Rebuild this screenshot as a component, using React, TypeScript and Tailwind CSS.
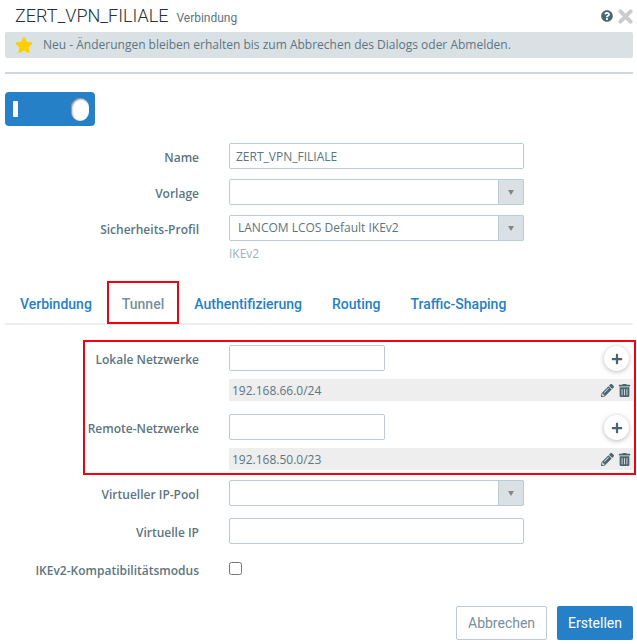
import { useState, type ReactNode } from "react";
import { FaPencilAlt, FaPlus, FaQuestionCircle, FaStar, FaTrashAlt } from "react-icons/fa";

const tabs = ["Verbindung", "Tunnel", "Authentifizierung", "Routing", "Traffic-Shaping"];

const inputClass =
  "block w-full rounded-xs border border-[#bccbd3] bg-white px-1.5 text-[12px] text-[#5b7582] outline-none focus:border-[#2580c8]";

interface FieldProps {
  id: string;
  label: string;
  children: ReactNode;
}

function Field({ id, label, children }: FieldProps) {
  return (
    <div className="grid grid-cols-[194px_1fr] items-start gap-x-[30px]">
      <label
        htmlFor={id}
        className="pt-[5px] text-right text-[12px] leading-5 font-semibold whitespace-nowrap"
      >
        {label}
      </label>
      <div className="min-w-0">{children}</div>
    </div>
  );
}

interface DropdownProps {
  id: string;
  options: string[];
}

function Dropdown({ id, options }: DropdownProps) {
  return (
    <div className="relative max-w-[295px]">
      <select id={id} className={`${inputClass} h-[26px] appearance-none pr-8 pl-2`}>
        {options.map((option) => (
          <option key={option}>{option}</option>
        ))}
      </select>
      <span className="pointer-events-none absolute inset-y-0 right-0 flex w-[26px] items-center justify-center rounded-r-xs border border-[#bccbd3] bg-[#dae1e5]">
        <svg viewBox="0 0 6 5" className="h-[5px] w-1.5 fill-[#858585]">
          <path d="M0 0h6L3 5z" />
        </svg>
      </span>
    </div>
  );
}

interface NetworkFieldProps {
  id: string;
  label: string;
  networks: string[];
}

function NetworkField({ id, label, networks }: NetworkFieldProps) {
  return (
    <Field id={id} label={label}>
      <div className="flex h-[26px] items-start justify-between">
        <input id={id} type="text" className={`${inputClass} h-[26px] max-w-[156px]`} />
        <button
          type="button"
          aria-label="Hinzufügen"
          className="mt-px mr-1 flex size-[25px] items-center justify-center rounded-full bg-white text-[#4a6572] shadow-[0_1px_5px_rgba(0,0,0,0.28)]"
        >
          <FaPlus className="size-3" />
        </button>
      </div>
      <ul className="mt-2 bg-[#eeeeee]">
        {networks.map((network) => (
          <li key={network} className="flex h-[22px] items-center pt-px pr-0.5 pl-[3px] text-[12px]">
            <span className="flex-1">{network}</span>
            <button type="button" aria-label="Bearbeiten" className="mr-1 text-[#4a6572]">
              <FaPencilAlt className="size-[13px]" />
            </button>
            <button type="button" aria-label="Löschen" className="text-[#4a6572]">
              <FaTrashAlt className="size-[13px]" />
            </button>
          </li>
        ))}
      </ul>
    </Field>
  );
}

export default function App() {
  const [enabled, setEnabled] = useState(true);
  const [activeTab, setActiveTab] = useState("Tunnel");

  return (
    <main className="bg-white pt-1 pr-1 pb-1 pl-[5px] font-['Open_Sans',sans-serif] text-[#5b7582]">
      <header className="flex h-7 items-center justify-between pl-2.5">
        <div className="flex items-baseline gap-2 pb-1 font-['Roboto',sans-serif]">
          <h1 className="text-[18px] leading-6 font-light text-[#263238]">ZERT_VPN_FILIALE</h1>
          <span className="text-[12px]">Verbindung</span>
        </div>
        <div className="flex items-center gap-[5px] pb-1">
          <button type="button" aria-label="Hilfe" className="text-[#4a6572]">
            <FaQuestionCircle className="size-3" />
          </button>
          <button type="button" aria-label="Schließen" className="text-[#cccccc]">
            <svg viewBox="0 0 15 15" className="size-[15px]" stroke="currentColor" fill="none">
              <path d="M2.4 2.4l10.2 10.2M12.6 2.4L2.4 12.6" strokeWidth="4" strokeLinecap="round" />
            </svg>
          </button>
        </div>
      </header>

      <p className="flex h-[26px] items-center gap-2.5 rounded-xs bg-[#dae1e5] pl-2.5 text-[12px]">
        <FaStar className="size-[18px] text-[#fcd000]" />
        Neu - Änderungen bleiben erhalten bis zum Abbrechen des Dialogs oder Abmelden.
      </p>

      <hr className="mt-3.5 border-t-2 border-[#d0d8dd]" />

      <label className="relative mt-[18px] flex h-[34px] w-[90px] items-center justify-between rounded-sm bg-[#2580c8] pr-1.5 pl-2">
        <input
          type="checkbox"
          role="switch"
          aria-label="Aktiv"
          checked={enabled}
          onChange={(e) => setEnabled(e.target.checked)}
          className="absolute inset-0 cursor-pointer appearance-none"
        />
        <span className="h-4 w-[5px] rounded-[1px] bg-white" />
        <span className="h-[23px] w-[18px] rounded-full bg-white shadow-[inset_1px_1px_2px_rgba(0,0,0,0.5)]" />
      </label>

      <form onSubmit={(e) => e.preventDefault()}>
        <div className="mt-[17px] space-y-2.5">
          <Field id="name" label="Name">
            <input
              id="name"
              type="text"
              defaultValue="ZERT_VPN_FILIALE"
              className={`${inputClass} h-[26px] max-w-[295px]`}
            />
          </Field>
          <Field id="template" label="Vorlage">
            <Dropdown id="template" options={[""]} />
          </Field>
          <Field id="profile" label="Sicherheits-Profil">
            <Dropdown id="profile" options={["LANCOM LCOS Default IKEv2"]} />
            <p className="mt-1 text-[12px] leading-[18px] text-[#9fb1bb]">IKEv2</p>
          </Field>
        </div>

        <nav className="mt-[18px] flex border-b-2 border-[#eeeeee] font-['Roboto',sans-serif]">
          {tabs.map((tab) => (
            <button
              key={tab}
              type="button"
              onClick={() => setActiveTab(tab)}
              className={`-mb-px h-[43px] border-2 px-[13px] pt-1 text-[14px] font-medium ${
                tab === activeTab
                  ? "border-[#f5000f] text-[#78909c]"
                  : "border-transparent text-[#2580c8]"
              }`}
            >
              {tab}
            </button>
          ))}
        </nav>

        <div className="relative mt-5 flex flex-col gap-[13px]">
          <NetworkField id="local" label="Lokale Netzwerke" networks={["192.168.66.0/24"]} />
          <NetworkField id="remote" label="Remote-Netzwerke" networks={["192.168.50.0/23"]} />
          {/* frame around both network lists */}
          <div className="pointer-events-none absolute -inset-y-[5px] -right-[3px] left-[78px] border-2 border-[#f5000f]" />
        </div>

        <div className="mt-2.5 space-y-3">
          <Field id="pool" label="Virtueller IP-Pool">
            <Dropdown id="pool" options={[""]} />
          </Field>
          <Field id="ip" label="Virtuelle IP">
            <input id="ip" type="text" className={`${inputClass} h-[26px] max-w-[295px]`} />
          </Field>
          <Field id="compat" label="IKEv2-Kompatibilitätsmodus">
            <input id="compat" type="checkbox" className="mt-1.5 block size-[13px]" />
          </Field>
        </div>

        <footer className="mt-[25px] flex justify-end gap-2.5 font-['Roboto',sans-serif] text-[14px]">
          <button
            type="button"
            className="h-[34px] rounded-xs border border-[#bccbd3] px-[11px] text-[#78909c]"
          >
            Abbrechen
          </button>
          <button type="submit" className="h-[34px] rounded-xs bg-[#2580c8] px-[11px] text-white">
            Erstellen
          </button>
        </footer>
      </form>
    </main>
  );
}
